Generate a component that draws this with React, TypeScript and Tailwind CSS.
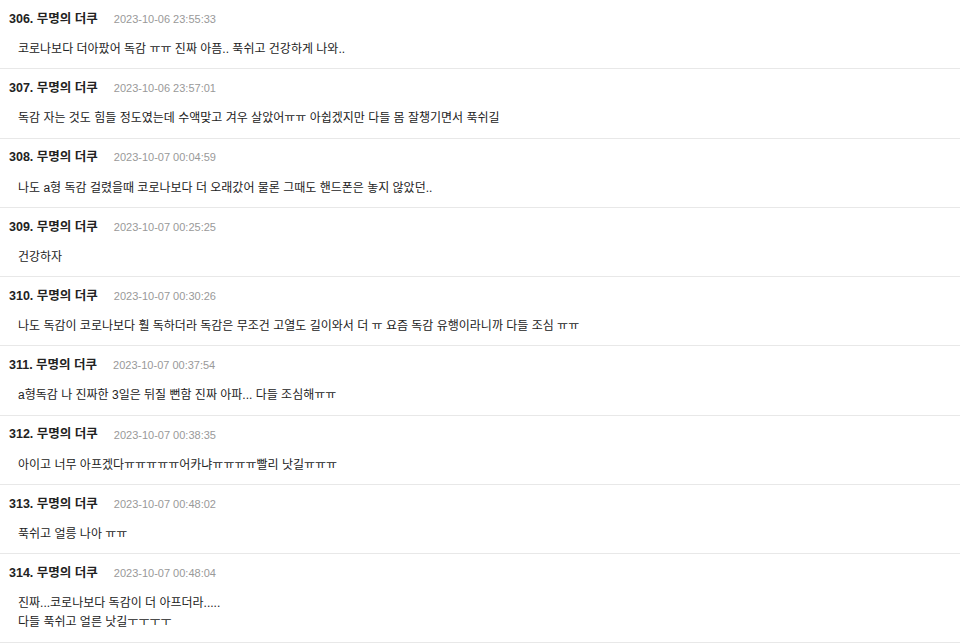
import React from 'react';

type Comment = {
  no: number;
  date: string;
  lines: string[];
};

const COMMENTS: Comment[] = [
  { no: 306, date: '2023-10-06 23:55:33', lines: ['코로나보다 더아팠어 독감 ㅠㅠ 진짜 아픔.. 푹쉬고 건강하게 나와..'] },
  { no: 307, date: '2023-10-06 23:57:01', lines: ['독감 자는 것도 힘들 정도였는데 수액맞고 겨우 살았어ㅠㅠ 아쉽겠지만 다들 몸 잘챙기면서 푹쉬길'] },
  { no: 308, date: '2023-10-07 00:04:59', lines: ['나도 a형 독감 걸렸을때 코로나보다 더 오래갔어 물론 그때도 핸드폰은 놓지 않았던..'] },
  { no: 309, date: '2023-10-07 00:25:25', lines: ['건강하자'] },
  { no: 310, date: '2023-10-07 00:30:26', lines: ['나도 독감이 코로나보다 훨 독하더라 독감은 무조건 고열도 길이와서 더 ㅠ 요즘 독감 유행이라니까 다들 조심 ㅠㅠ'] },
  { no: 311, date: '2023-10-07 00:37:54', lines: ['a형독감 나 진짜한 3일은 뒤질 뻔함 진짜 아파... 다들 조심해ㅠㅠ'] },
  { no: 312, date: '2023-10-07 00:38:35', lines: ['아이고 너무 아프겠다ㅠㅠㅠㅠㅠ어카냐ㅠㅠㅠㅠ빨리 낫길ㅠㅠㅠ'] },
  { no: 313, date: '2023-10-07 00:48:02', lines: ['푹쉬고 얼릉 나아 ㅠㅠ'] },
  { no: 314, date: '2023-10-07 00:48:04', lines: ['진짜...코로나보다 독감이 더 아프더라.....', '다들 푹쉬고 얼른 낫길ㅜㅜㅜㅜ'] },
];

const CommentRow: React.FC<{ c: Comment }> = ({ c }) => {
  return (
    <li className="border-b border-[#e8e8e8] pt-[11px] pb-[9.3px] pl-[9px] pr-4">
      {/* header: number + nick + date */}
      <div className="flex items-center h-[16px]">
        <span className="text-[12.5px] font-bold text-[#222]">
          {c.no}. 무명의 더쿠
        </span>
        <span className="ml-[16px] text-[11px] text-[#999]">
          {c.date}
        </span>
      </div>
      {/* body */}
      <div className="mt-[13px] pl-[9px] text-[12px] leading-[19px] text-[#222]">
        {c.lines.map((l, i) => (
          <p key={i}>{l}</p>
        ))}
      </div>
    </li>
  );
};

export default function App() {
  return (
    <div className="w-[960px] min-h-[643px] bg-white font-['Liberation_Sans','Noto_Sans_CJK_KR',sans-serif]">
      <ul>
        {COMMENTS.map((c) => (
          <CommentRow key={c.no} c={c} />
        ))}
      </ul>
    </div>
  );
}
